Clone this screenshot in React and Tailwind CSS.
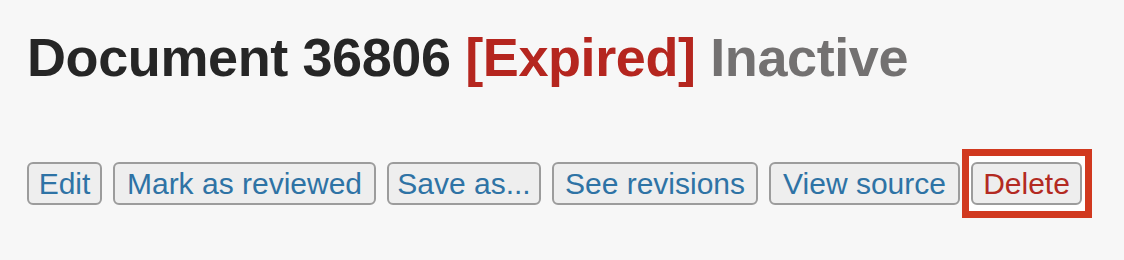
export default function App() {
  const btn =
    "h-[43px] flex items-center justify-center border-2 border-[#9c9c9c] rounded-[6px] bg-[#eeeeee] text-[30px] leading-none text-[#2e73a5] whitespace-nowrap";
  return (
    <div
      className="w-[1124px] h-[260px] bg-[#f7f7f7] pl-[27px] pt-[30px]"
      style={{ fontFamily: '"Liberation Sans", Arial, sans-serif' }}
    >
      <h1 className="text-[54px] leading-none font-bold text-[#262626] tracking-[-0.4px] whitespace-nowrap">
        Document 36806 <span className="text-[#b5261f]">[Expired]</span>{" "}
        <span className="text-[#737171]">Inactive</span>
      </h1>
      <div className="mt-[78px] flex gap-[11px]">
        <button className={btn + " w-[75px]"}>Edit</button>
        <button className={btn + " w-[263px]"}>Mark as reviewed</button>
        <button className={btn + " w-[154px]"}>Save as...</button>
        <button className={btn + " w-[206px]"}>See revisions</button>
        <button className={btn + " w-[191px]"}>View source</button>
        <div className="relative">
          <div className="absolute left-[-9px] right-[-10px] top-[-13px] bottom-[-13px] border-[7px] border-[#d1391f] bg-white"></div>
          <button className={btn + " w-[111px] relative text-[#b32a22]"}>Delete</button>
        </div>
      </div>
    </div>
  );
}
